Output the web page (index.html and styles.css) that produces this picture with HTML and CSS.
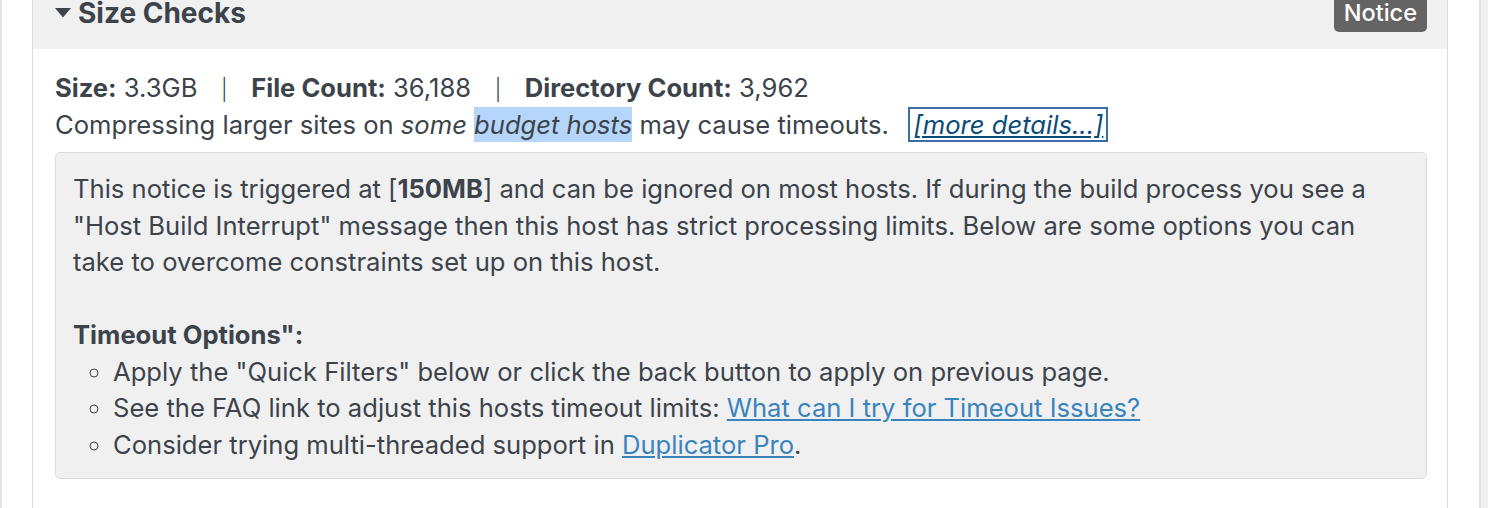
FILE: index.html
```html
<!DOCTYPE html>
<html>
<head>
    <title>Size Checks</title>
    <meta name="viewport" content="width=device-width, initial-scale=1.0">
    <link rel="stylesheet" href="styles.css">
</head>
<body>
    <div class="wrap">
        <div class="check">
            <div class="check-head">
                <h2>
                    <svg class="caret" width="16" height="10" viewBox="0 0 16 10">
                        <path d="M0 0h16L8 9.5z" fill="currentColor"/>
                    </svg>
                    Size Checks
                </h2>
                <span class="badge">Notice</span>
            </div>
            <div class="check-body">
                <div class="stats">
                    <b>Size:</b> 3.3GB &nbsp;&nbsp;<span class="sep">|</span>&nbsp;&nbsp; <b>File Count:</b> 36,188 &nbsp;&nbsp;<span class="sep">|</span>&nbsp;&nbsp; <b>Directory Count:</b> 3,962
                </div>
                <div>
                    Compressing larger sites on <i>some <span class="sel">budget hosts</span></i> may cause timeouts. &nbsp;&nbsp;<a href="#" class="more">[more details...]</a>
                </div>
                <div class="info">
                    This notice is triggered at [<b>150MB</b>] and can be ignored on most hosts. If during the build process you see a "Host Build Interrupt" message then this host has strict processing limits. Below are some options you can take to overcome constraints set up on this host.
                    <br><br>
                    <b>Timeout Options":</b>
                    <ul>
                        <li>Apply the "Quick Filters" below or click the back button to apply on previous page.</li>
                        <li>See the FAQ link to adjust this hosts timeout limits: <a href="#">What can I try for Timeout Issues?</a></li>
                        <li>Consider trying multi-threaded support in <a href="#">Duplicator Pro</a>.</li>
                    </ul>
                </div>
            </div>
        </div>
    </div>
</body>
</html>
```

FILE: styles.css
```css
:root {
    --page-bg: #f0f0f1;
    --text-color: #3c434a;
    --border-color: #dcdcde;
    --head-bg: #f0f0f0;
    --link-color: #3a84bd;
    --link-focus: #0a4b78;
    --focus-ring: #3a6ea9;
    --badge-bg: #646464;
    --select-bg: #b5d5fb;
}

body {
    margin: 0;
    background-color: var(--page-bg);
    color: var(--text-color);
    font-family: Inter, "Open Sans", sans-serif;
    font-size: 25.6px;
    line-height: 36.5px;
}

.wrap {
    width: 1416px;
    margin-top: -25px;
    padding: 0 31px 60px 30px;
    background-color: #ffffff;
    border-left: 2px solid #e2e2e4;
    border-right: 2px solid #e2e2e4;
}

.check {
    border: 1px solid var(--border-color);
    background-color: #ffffff;
}

.check-head {
    display: flex;
    align-items: center;
    justify-content: space-between;
    padding: 18px 20px 17px 22px;
    background-color: var(--head-bg);
}

.check-head h2 {
    display: flex;
    align-items: center;
    gap: 7px;
    margin: 0;
    font-size: 28px;
    line-height: 36px;
    font-weight: 700;
}

.badge {
    padding: 4px 10px;
    border-radius: 5px;
    background-color: var(--badge-bg);
    color: #ffffff;
    font-size: 23.5px;
    line-height: 30px;
    font-weight: 500;
}

.check-body {
    padding: 21px 20px 40px 22px;
}

.stats b,
.info b {
    font-weight: 700;
}

.sep {
    padding: 0 2px;
    font-size: 21px;
    font-weight: 300;
    line-height: 0;
}

.sel {
    padding: 2px 0;
    background-color: var(--select-bg);
}

a {
    color: var(--link-color);
}

a.more {
    padding: 0 3px;
    color: var(--link-focus);
    font-style: italic;
    outline: 2px solid var(--focus-ring);
}

.info {
    margin-top: 9px;
    padding: 18px 18px 15px 17px;
    background-color: var(--page-bg);
    border: 1px solid var(--border-color);
    border-radius: 5px;
}

.info ul {
    margin: 0;
    padding-left: 40px;
    list-style: circle;
}
```
